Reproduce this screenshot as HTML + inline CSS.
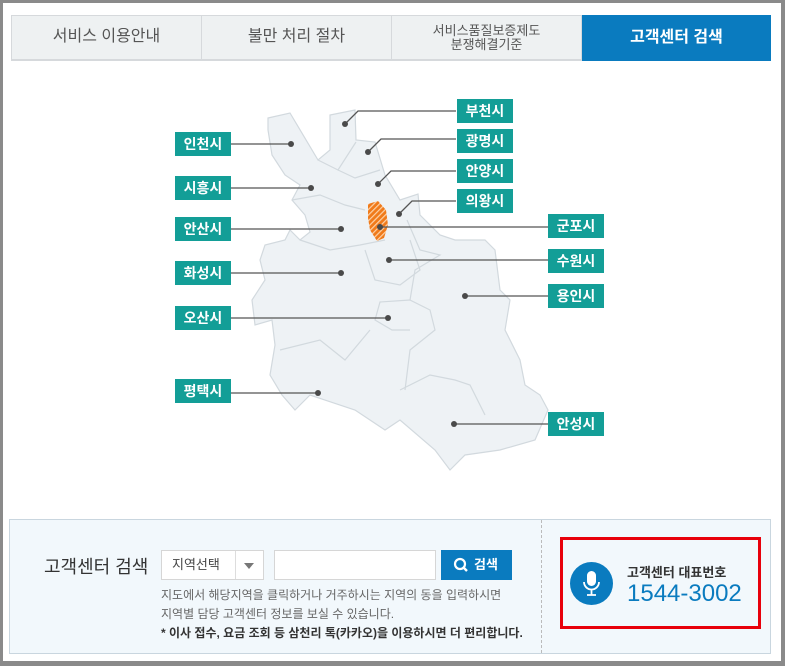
<!DOCTYPE html>
<html><head><meta charset="utf-8"><style>
*{margin:0;padding:0;box-sizing:border-box}
body{width:785px;height:666px;background:#8a8a8a;font-family:"Liberation Sans","Noto Sans CJK KR",sans-serif;position:relative;overflow:hidden}
.page{position:absolute;left:3px;top:3px;width:778px;height:658px;background:#fff}
.tabs{position:absolute;left:11px;top:15px;width:760px;height:46px;display:flex;border:1px solid #d6d9dc;border-bottom:2px solid #d6d9dc}
.tab{flex:1;display:flex;align-items:center;justify-content:center;text-align:center;background:#eef1f2;color:#555;font-size:16px;border-right:1px solid #d6d9dc;line-height:1.05}
.tab.s{font-size:13px}
.tab.on{background:#0a7bbf;color:#fff;border:none;margin:-1px -1px -2px 0;font-weight:bold}
.lb{position:absolute;background:#139e97;color:#fff;font-size:14px;width:56px;height:24px;line-height:24px;text-align:center;font-weight:bold}
.box{position:absolute;left:9px;top:519px;width:762px;height:135px;background:#f2f8fc;border:1px solid #c9d6df}
.dv{position:absolute;left:531px;top:0;height:133px;border-left:1px dashed #bbb}
</style></head><body>
<div class="page"></div>
<div class="tabs"><div class="tab">서비스 이용안내</div><div class="tab">불만 처리 절차</div><div class="tab s">서비스품질보증제도<br>분쟁해결기준</div><div class="tab on">고객센터 검색</div></div>
<svg style="position:absolute;left:0;top:0" width="785" height="666">
<defs><pattern id="h" width="4" height="4" patternUnits="userSpaceOnUse" patternTransform="rotate(45)"><rect width="4" height="4" fill="#f07a1a"/><rect width="1.2" height="4" fill="#fcd2a8"/></pattern></defs>
<polygon fill="#eef2f5" stroke="#d2d9de" stroke-width="1.2" points="268,118 290,113 318,160 330,150 330,115 355,110 356,140 375,142 385,175 400,200 418,194 420,215 440,235 455,240 485,240 495,250 500,290 510,300 505,330 520,360 525,385 540,395 548,410 535,440 500,450 465,455 450,470 435,450 400,420 385,430 355,410 310,395 295,410 282,395 270,375 275,345 272,320 255,325 252,300 265,280 260,260 265,245 285,240 290,230 300,240 310,232 305,215 292,200 300,185 285,175 272,155 268,130"/>
<g fill="none" stroke="#d2d9de" stroke-width="1.2">
<path d="M318,160 L338,170 L356,142"/><path d="M338,170 L355,178 L380,170"/><path d="M292,200 L320,195 L345,205 L365,210"/><path d="M300,240 L330,250 L360,245 L385,240"/><path d="M365,250 L375,280 L400,285 L420,270 L410,240"/><path d="M407,220 L420,250 L440,255 L415,270 L410,300 L430,310 L435,330 L410,350 L405,390"/><path d="M410,300 L380,302 L375,320 L392,330 L410,330"/><path d="M280,350 L320,340 L345,360 L370,330"/><path d="M400,390 L430,375 L455,380 L470,385 L485,415"/></g>
<path d="M368,204 L378,201 L386,210 L388,225 L384,238 L377,241 L370,230 L368,218 Z" fill="url(#h)"/>
<g stroke="#555" stroke-width="1.3" fill="none">
<path d="M231,144H291M231,188H311M231,229H341M231,273H341M231,318H388M231,393H318"/>
<path d="M345,124L358,111H456M368,152L381,139H456M378,184L391,171H456M399,214L412,201H456M380,227H548M389,260H548M465,296H548M454,424H548"/></g>
<g fill="#4a4a4a"><circle cx="291" cy="144" r="3"/><circle cx="311" cy="188" r="3"/><circle cx="341" cy="229" r="3"/><circle cx="341" cy="273" r="3"/><circle cx="388" cy="318" r="3"/><circle cx="318" cy="393" r="3"/><circle cx="345" cy="124" r="3"/><circle cx="368" cy="152" r="3"/><circle cx="378" cy="184" r="3"/><circle cx="399" cy="214" r="3"/><circle cx="380" cy="227" r="3"/><circle cx="389" cy="260" r="3"/><circle cx="465" cy="296" r="3"/><circle cx="454" cy="424" r="3"/></g>
</svg>
<div class="lb" style="left:175px;top:132px">인천시</div>
<div class="lb" style="left:175px;top:176px">시흥시</div>
<div class="lb" style="left:175px;top:217px">안산시</div>
<div class="lb" style="left:175px;top:261px">화성시</div>
<div class="lb" style="left:175px;top:306px">오산시</div>
<div class="lb" style="left:175px;top:379px">평택시</div>
<div class="lb" style="left:457px;top:99px">부천시</div>
<div class="lb" style="left:457px;top:129px">광명시</div>
<div class="lb" style="left:457px;top:159px">안양시</div>
<div class="lb" style="left:457px;top:189px">의왕시</div>
<div class="lb" style="left:548px;top:214px">군포시</div>
<div class="lb" style="left:548px;top:249px">수원시</div>
<div class="lb" style="left:548px;top:284px">용인시</div>
<div class="lb" style="left:548px;top:412px">안성시</div>
<div class="box">
<div style="position:absolute;left:34px;top:33px;font-size:18px;color:#333">고객센터 검색</div>
<div style="position:absolute;left:151px;top:30px;width:103px;height:30px;background:#fff;border:1px solid #d6d6d6;font-size:13px;color:#444;line-height:28px;padding-left:10px">지역선택<span style="position:absolute;left:73px;top:0;width:1px;height:28px;background:#ddd"></span><span style="position:absolute;left:82px;top:12px;border:5px solid transparent;border-top:6px solid #777;border-bottom:0"></span></div>
<div style="position:absolute;left:264px;top:30px;width:162px;height:30px;background:#fff;border:1px solid #d6d6d6"></div>
<div style="position:absolute;left:431px;top:30px;width:71px;height:30px;background:#0a7bbf;color:#fff;font-size:13px;font-weight:bold;line-height:30px;padding-left:33px"><svg style="position:absolute;left:12px;top:7px" width="16" height="16"><circle cx="7" cy="7" r="5" fill="none" stroke="#fff" stroke-width="2.2"/><path d="M10,10L14,14" stroke="#fff" stroke-width="2.4"/></svg>검색</div>
<div style="position:absolute;left:151px;top:66px;font-size:12px;color:#666;line-height:19px">지도에서 해당지역을 클릭하거나 거주하시는 지역의 동을 입력하시면<br>지역별 담당 고객센터 정보를 보실 수 있습니다.<br><b style="color:#333">* 이사 접수, 요금 조회 등 삼천리 톡(카카오)을 이용하시면 더 편리합니다.</b></div>
<div class="dv"></div>
<div style="position:absolute;left:550px;top:17px;width:201px;height:92px;border:3px solid #e8000b">
<div style="position:absolute;left:7px;top:22px;width:43px;height:43px;border-radius:50%;background:#0a7bbf"><svg width="43" height="43"><rect x="17" y="9" width="9" height="15" rx="4.5" fill="#fff"/><path d="M14,20a7.5,7.5 0 0 0 15,0M21.5,28v5M17,33h9" stroke="#fff" stroke-width="1.8" fill="none"/></svg></div>
<div style="position:absolute;left:64px;top:22px;font-size:13px;color:#333;font-weight:bold">고객센터 대표번호</div>
<div style="position:absolute;left:64px;top:40px;font-size:24px;color:#0a7bbf">1544-3002</div>
</div>
</div>
</body></html>
